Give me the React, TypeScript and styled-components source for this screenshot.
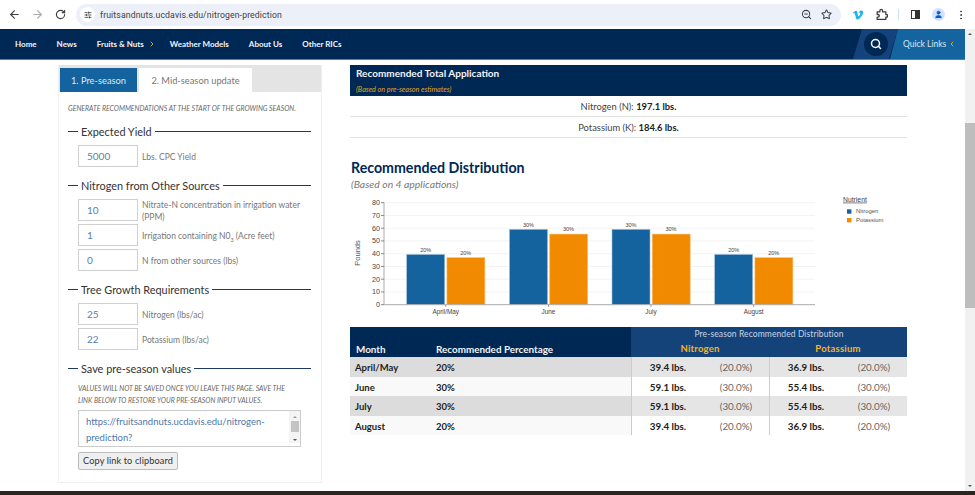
import React from "react";
import styled, { createGlobalStyle } from "styled-components";
import { ArrowLeft, ArrowRight, RotateCw, SlidersHorizontal, ZoomOut, Star, User, MoreVertical, ChevronRight, ChevronLeft, Search } from "lucide-react";
import { FaVimeoV } from "react-icons/fa";

const Global = createGlobalStyle`
  html, body { margin: 0; padding: 0; background: #fff; overflow: hidden; }
  * { box-sizing: border-box; }
  body { font-family: Lato, "Open Sans", sans-serif; }
`;

const Screen = styled.div`
  width: 975px; height: 495px; display: flex; flex-direction: column; overflow: hidden; background: #fff;
`;
const BrowserBar = styled.div`
  height: 29px; flex: none; display: flex; align-items: center; background: #fff; padding-left: 3px;
`;
const ToolIcon = styled.span<{ $w?: number; $c?: string; $ml?: number }>`
  width: ${p => p.$w ?? 23}px; margin-left: ${p => p.$ml ?? 0}px; display: flex; justify-content: center; align-items: center; color: ${p => p.$c ?? "#3c4043"}; flex: none;
`;
const UrlPill = styled.div`
  margin-left: 4px; width: 765px; height: 22px; border-radius: 11px; background: #edf0f9; display: flex; align-items: center; padding-left: 4px; padding-right: 5px; flex: none;
`;
const SiteChip = styled.span`
  width: 15px; height: 15px; border-radius: 50%; background: #fff; display: flex; align-items: center; justify-content: center; color: #333; flex: none;
`;
const UrlText = styled.span`
  margin-left: 5px; font: 8.7px Roboto, sans-serif; color: #3c4043; letter-spacing: .12px; flex: 1;
`;
const Divider = styled.span`
  width: 1px; height: 11px; background: #cfe0f0; margin: 0 6px 0 5px; flex: none;
`;
const Avatar = styled.span`
  width: 13px; height: 13px; border-radius: 50%; background: #d3e3fd; color: #0b57d0; display: flex; align-items: center; justify-content: center;
`;
const SidePanel = styled.span`
  width: 9px; height: 9px; border: 1.4px solid #333; display: block; background: linear-gradient(90deg, #fff 50%, #333 50%);
`;
const Viewport = styled.div`
  flex: 1; display: flex; min-height: 0;
`;
const PageColumn = styled.div`
  flex: 1; display: flex; flex-direction: column; min-width: 0;
`;
const Nav = styled.nav`
  height: 31px; flex: none; background: #002855; border-bottom: 1px solid #5d7fa5; display: flex; align-items: center; padding-left: 15px;
`;
const NavLink = styled.a<{ $mr?: number }>`
  color: #f3f5f8; font: 700 8px Lato, sans-serif; margin-right: ${p => p.$mr ?? 20}px; display: flex; align-items: center; gap: 4px; white-space: nowrap;
`;
const NavRight = styled.div`
  margin-left: auto; display: flex; height: 100%;
`;
const SearchBlock = styled.div`
  width: 45px; background: #14427a; clip-path: polygon(9px 0, 100% 0, 36px 100%, 0 100%); display: flex; align-items: center; justify-content: center;
`;
const SearchCircle = styled.span`
  width: 24px; height: 24px; border-radius: 50%; background: #002855; color: #fff; display: flex; align-items: center; justify-content: center;
`;
const QuickBlock = styled.div`
  width: 75px; margin-left: -8px; background: #14659f; clip-path: polygon(8px 0, 100% 0, 100% 100%, 0 100%); display: flex; align-items: center; padding-left: 13px; gap: 2px; color: #d8e6f2; font: 400 8.5px Lato, sans-serif; white-space: nowrap;
`;
const Content = styled.div`
  flex: 1; display: flex; align-items: flex-start; padding: 5px 0 0 58px; gap: 28px; min-height: 0;
`;
const Panel = styled.section`
  width: 264px; height: 418px; flex: none; border: 1px solid #efefef; border-top: 0;
`;
const Tabs = styled.div`
  height: 27px; background: #e4e4e4; display: flex; align-items: flex-end; padding-left: 1px; gap: 2px;
`;
const Tab = styled.div<{ $on?: boolean; $w: number }>`
  width: ${p => p.$w}px; height: 24px; display: flex; align-items: center; justify-content: center; font: 400 9.3px Lato, sans-serif;
  background: ${p => (p.$on ? "#14639e" : "#fff")}; color: ${p => (p.$on ? "#dfe9f3" : "#777")};
`;
const Intro = styled.p`
  margin: 10px 0 0 9px; font: italic 400 6.9px/12px Lato, sans-serif; color: #666; text-transform: uppercase; white-space: nowrap;
`;
const Fieldset = styled.div<{ $mt: number }>`
  margin: ${p => p.$mt}px 10px 0 9px;
`;
const Legend = styled.div`
  display: flex; align-items: center; height: 14px; font: 400 10.9px Lato, sans-serif; color: #333; gap: 3px; white-space: nowrap;
  &::before { content: ""; width: 10px; height: 1px; background: #1d3a60; }
  &::after { content: ""; flex: 1; height: 1px; background: #1d3a60; }
`;
const Rows = styled.div`
  margin: 7px 0 0 10px; display: flex; flex-direction: column; gap: 3px;
`;
const Row = styled.div`
  display: flex; align-items: center; gap: 4px; height: 22px;
`;
const FieldInput = styled.div`
  width: 60px; height: 22px; flex: none; border: 1.5px solid #d0d0d0; display: flex; align-items: center; padding-left: 8px; font: 400 10px Lato, sans-serif; color: #5b80ad;
`;
const FieldLabel = styled.span`
  font: 400 8.5px/12px Lato, sans-serif; color: #777; padding-top: 1px;
  sub { font-size: 5.5px; line-height: 0; }
`;
const SaveNote = styled.p`
  margin: 7px 0 0 10px; font: italic 400 6.9px/12px Lato, sans-serif; color: #666; text-transform: uppercase; white-space: nowrap;
`;
const LinkBox = styled.div`
  margin: 4px 0 0 10px; width: 223px; height: 37px; border: 1px solid #ccc; display: flex; justify-content: space-between; padding: 3px 0 0 7px; overflow: hidden;
  font: 400 9.5px/15.5px Lato, sans-serif; color: #4f77a8;
`;
const BoxScroll = styled.div`
  width: 11px; height: 100%; margin-top: -3px; background: #f4f4f4; display: flex; flex-direction: column; align-items: center; justify-content: space-between; flex: none; padding: 5px 0 2px;
  &::before { content: ""; border: 2.5px solid transparent; border-bottom-color: #999; border-top: 0; }
  &::after { content: ""; border: 2.5px solid transparent; border-top-color: #555; border-bottom: 0; }
`;
const BoxThumb = styled.span`
  width: 8px; height: 11px; background: #c4c4c4; margin-bottom: 4px;
`;
const CopyButton = styled.button`
  display: block; margin: 4.5px 0 0 10px; width: 100px; height: 18px; padding: 0; background: #efefef; border: 1.5px solid #bbb; border-radius: 2px; font: 400 9.2px Lato, sans-serif; color: #333; letter-spacing: .1px;
`;
const Results = styled.div`
  width: 557px; flex: none;
`;
const TotalHead = styled.div`
  height: 31px; background: #002855; padding: 2px 6px 1px; display: flex; flex-direction: column; justify-content: space-between;
`;
const TotalTitle = styled.div`
  font: 700 10px/13px Lato, sans-serif; color: #f1f4f7;
`;
const TotalSub = styled.div`
  font: italic 400 7.2px/10px Lato, sans-serif; color: #e0a11f;
`;
const TotalRow = styled.div`
  height: 21px; border-bottom: 1px solid #e2e2e2; text-align: center; font: 400 9.4px/21px Lato, sans-serif; color: #444;
  b { color: #222; }
`;
const DistTitle = styled.h2`
  margin: 20px 0 0 1px; font: 700 14.2px/20px Lato, sans-serif; color: #002855;
`;
const DistSub = styled.div`
  font: italic 400 10.4px/12px Lato, sans-serif; color: #777; margin: 0 0 0 1px;
`;
const ChartSvg = styled.svg`
  display: block; margin: 5px 0 0 1px; text { font-family: "Liberation Sans", sans-serif; }
`;
const Table = styled.div`
  margin-top: 5px; display: grid; grid-template-columns: 86px 195px 138px 138px;
`;
const HeadLeft = styled.div<{ $pl?: number }>`
  background: #002855; height: 30px; color: #f1f4f7; font: 700 9.9px/14px Lato, sans-serif; padding: 15px 0 0 ${p => p.$pl ?? 0}px; white-space: nowrap;
`;
const HeadRight = styled.div`
  grid-column: span 2; background: #14437a; height: 30px; display: flex; flex-direction: column; align-items: center;
`;
const HeadTop = styled.div`
  height: 15px; font: 400 8.5px/15px Lato, sans-serif; color: #c7d4e4; letter-spacing: .1px;
`;
const HeadCols = styled.div`
  display: grid; grid-template-columns: 138px 138px; width: 100%; text-align: center; padding-right: 4px; font: 700 9.5px/14px Lato, sans-serif; color: #f3b61f; letter-spacing: .2px;
`;
const Cell = styled.div<{ $odd: boolean; $pl?: number }>`
  height: 19.6px; background: ${p => (p.$odd ? "#dcdcdc" : "#f9f9f9")}; font: 700 9.5px/21.5px Lato, sans-serif; color: #222; padding-left: ${p => p.$pl ?? 0}px;
`;
const ValueCell = styled.div<{ $odd: boolean }>`
  height: 19.6px; background: ${p => (p.$odd ? "#e5e5e5" : "#fff")}; border-left: 1px solid #ccc; display: grid; grid-template-columns: 72px 64px; text-align: center; font: 400 9.8px/21px Lato, sans-serif; color: #666;
  b { color: #222; font-weight: 700; }
`;
const Scrollbar = styled.div`
  width: 10px; flex: none; background: #f1f1f1; display: flex; flex-direction: column; align-items: center; padding-top: 4px;
  &::before { content: ""; border: 2.5px solid transparent; border-bottom-color: #555; border-top: 0; }
  &::after { content: ""; margin-top: auto; margin-bottom: 4px; border: 2.5px solid transparent; border-top-color: #555; border-bottom: 0; }
`;
const Thumb = styled.div`
  width: 100%; height: 185px; background: #bdbdbd; margin-top: 88px;
`;
const Footer = styled.div`
  height: 4px; flex: none; background: #2b2620;
`;

const ticks = [0, 10, 20, 30, 40, 50, 60, 70, 80];
const y = (v: number) => 109.7 - v * 1.275;
const groups = [
  { name: "April/May", x: 55.7, n: 39.4, k: 36.9, p: "20%" },
  { name: "June", x: 158.5, n: 59.1, k: 55.4, p: "30%" },
  { name: "July", x: 261, n: 59.1, k: 55.4, p: "30%" },
  { name: "August", x: 363.7, n: 39.4, k: 36.9, p: "20%" },
];

function ExtensionIcon() {
  return (
    <svg width={13} height={13} viewBox="0 0 24 24" fill="none" stroke="#3c4043" strokeWidth={2.4} strokeLinejoin="round">
      <path d="M4 7h5V5a2.5 2.5 0 0 1 5 0v2h6v5h1a2.5 2.5 0 0 1 0 5h-1v4H4v-4h1.5a2.5 2.5 0 0 0 0-5H4z" />
    </svg>
  );
}

function Chart() {
  return (
    <ChartSvg width={556} height={127} viewBox="0 0 556 127">
      {ticks.slice(1).map(t => <line key={t} x1={33} x2={464} y1={y(t)} y2={y(t)} stroke="#f3f3f3" />)}
      <line x1={33} x2={33} y1={y(80)} y2={y(0)} stroke="#aaa" />
      {ticks.map(t => (
        <g key={t}>
          <line x1={30} x2={33} y1={y(t)} y2={y(t)} stroke="#888" />
          <text x={29} y={y(t) + 2.5} fontSize={7.2} fill="#444" textAnchor="end">{t}</text>
        </g>
      ))}
      <text transform="translate(8.5 58) rotate(-90)" fontSize={7.5} fill="#555" textAnchor="middle">Pounds</text>
      {groups.map(g => (
        <g key={g.name}>
          <rect x={g.x} y={y(g.n)} width={38} height={g.n * 1.275} fill="#14639e" stroke="#9dbfd9" strokeWidth={0.6} />
          <rect x={g.x + 40.2} y={y(g.k)} width={38} height={g.k * 1.275} fill="#f28a00" stroke="#f8c27a" strokeWidth={0.6} />
          <text x={g.x + 19} y={y(g.n) - 2.8} fontSize={5.5} fill="#444" textAnchor="middle">{g.p}</text>
          <text x={g.x + 59} y={y(g.k) - 2.8} fontSize={5.5} fill="#444" textAnchor="middle">{g.p}</text>
          <line x1={g.x + 39} x2={g.x + 39} y1={y(0)} y2={y(0) + 2} stroke="#888" />
          <text x={g.x + 39} y={y(0) + 9} fontSize={6.4} fill="#444" textAnchor="middle">{g.name}</text>
        </g>
      ))}
      <line x1={33} x2={464} y1={y(0)} y2={y(0)} stroke="#aaa" />
      <text x={492} y={6.6} fontSize={6.8} fill="#444" textDecoration="underline">Nutrient</text>
      <rect x={496} y={14.3} width={4.4} height={4.4} fill="#14639e" />
      <text x={505} y={18.2} fontSize={5.9} fill="#555">Nitrogen</text>
      <rect x={496} y={23} width={4.4} height={4.4} fill="#f28a00" />
      <text x={505} y={27} fontSize={5.9} fill="#555">Potassium</text>
    </ChartSvg>
  );
}

const months = [
  { m: "April/May", p: "20%", n: "39.4", np: "(20.0%)", k: "36.9", kp: "(20.0%)" },
  { m: "June", p: "30%", n: "59.1", np: "(30.0%)", k: "55.4", kp: "(30.0%)" },
  { m: "July", p: "30%", n: "59.1", np: "(30.0%)", k: "55.4", kp: "(30.0%)" },
  { m: "August", p: "20%", n: "39.4", np: "(20.0%)", k: "36.9", kp: "(20.0%)" },
];

export default function App() {
  return (
    <Screen>
      <Global />
      <BrowserBar>
        <ToolIcon><ArrowLeft size={13} /></ToolIcon>
        <ToolIcon $c="#a8a8a8"><ArrowRight size={13} /></ToolIcon>
        <ToolIcon><RotateCw size={11} strokeWidth={2.4} /></ToolIcon>
        <UrlPill>
          <SiteChip><SlidersHorizontal size={8} strokeWidth={2.4} /></SiteChip>
          <UrlText>fruitsandnuts.ucdavis.edu/nitrogen-prediction</UrlText>
          <ToolIcon $w={20}><ZoomOut size={11} strokeWidth={2.2} /></ToolIcon>
          <ToolIcon $w={20}><Star size={11} strokeWidth={2.2} /></ToolIcon>
        </UrlPill>
        <ToolIcon $w={24} $c="#1ab7ea" $ml={5}><FaVimeoV size={12} /></ToolIcon>
        <ToolIcon $w={23}><ExtensionIcon /></ToolIcon>
        <Divider />
        <ToolIcon $w={20}><SidePanel /></ToolIcon>
        <ToolIcon $w={26}><Avatar><User size={9} fill="#0b57d0" /></Avatar></ToolIcon>
        <ToolIcon $w={20}><MoreVertical size={12} /></ToolIcon>
      </BrowserBar>
      <Viewport>
        <PageColumn>
          <Nav>
            <NavLink>Home</NavLink>
            <NavLink>News</NavLink>
            <NavLink $mr={14}>Fruits &amp; Nuts <ChevronRight size={8} color="#e0a11f" strokeWidth={3} /></NavLink>
            <NavLink>Weather Models</NavLink>
            <NavLink>About Us</NavLink>
            <NavLink>Other RICs</NavLink>
            <NavRight>
              <SearchBlock><SearchCircle><Search size={12} strokeWidth={3} /></SearchCircle></SearchBlock>
              <QuickBlock>Quick Links <ChevronLeft size={8} color="#e0a11f" strokeWidth={3} /></QuickBlock>
            </NavRight>
          </Nav>
          <Content>
            <Panel>
              <Tabs>
                <Tab $on $w={77}>1. Pre-season</Tab>
                <Tab $w={113}>2. Mid-season update</Tab>
              </Tabs>
              <Intro>Generate recommendations at the start of the growing season.</Intro>
              <Fieldset $mt={10}>
                <Legend>Expected Yield</Legend>
                <Rows>
                  <Row><FieldInput>5000</FieldInput><FieldLabel>Lbs. CPC Yield</FieldLabel></Row>
                </Rows>
              </Fieldset>
              <Fieldset $mt={11}>
                <Legend>Nitrogen from Other Sources</Legend>
                <Rows>
                  <Row><FieldInput>10</FieldInput><FieldLabel>Nitrate-N concentration in irrigation water (PPM)</FieldLabel></Row>
                  <Row><FieldInput>1</FieldInput><FieldLabel>Irrigation containing N0<sub>3</sub> (Acre feet)</FieldLabel></Row>
                  <Row><FieldInput>0</FieldInput><FieldLabel>N from other sources (lbs)</FieldLabel></Row>
                </Rows>
              </Fieldset>
              <Fieldset $mt={11}>
                <Legend>Tree Growth Requirements</Legend>
                <Rows>
                  <Row><FieldInput>25</FieldInput><FieldLabel>Nitrogen (lbs/ac)</FieldLabel></Row>
                  <Row><FieldInput>22</FieldInput><FieldLabel>Potassium (lbs/ac)</FieldLabel></Row>
                </Rows>
              </Fieldset>
              <Fieldset $mt={11}>
                <Legend>Save pre-season values</Legend>
                <SaveNote>Values will not be saved once you leave this page. Save the<br />link below to restore your pre-season input values.</SaveNote>
                <LinkBox>
                  <div>https://fruitsandnuts.ucdavis.edu/nitrogen-<br />prediction?</div>
                  <BoxScroll><BoxThumb /></BoxScroll>
                </LinkBox>
                <CopyButton>Copy link to clipboard</CopyButton>
              </Fieldset>
            </Panel>
            <Results>
              <TotalHead>
                <TotalTitle>Recommended Total Application</TotalTitle>
                <TotalSub>(Based on pre-season estimates)</TotalSub>
              </TotalHead>
              <TotalRow>Nitrogen (N): <b>197.1 lbs.</b></TotalRow>
              <TotalRow>Potassium (K): <b>184.6 lbs.</b></TotalRow>
              <DistTitle>Recommended Distribution</DistTitle>
              <DistSub>(Based on 4 applications)</DistSub>
              <Chart />
              <Table>
                <HeadLeft $pl={6}>Month</HeadLeft>
                <HeadLeft>Recommended Percentage</HeadLeft>
                <HeadRight>
                  <HeadTop>Pre-season Recommended Distribution</HeadTop>
                  <HeadCols><span>Nitrogen</span><span>Potassium</span></HeadCols>
                </HeadRight>
                {months.map((r, i) => (
                  <React.Fragment key={r.m}>
                    <Cell $odd={i % 2 === 0} $pl={5}>{r.m}</Cell>
                    <Cell $odd={i % 2 === 0}>{r.p}</Cell>
                    <ValueCell $odd={i % 2 === 0}><b>{r.n} lbs.</b><span>{r.np}</span></ValueCell>
                    <ValueCell $odd={i % 2 === 0}><b>{r.k} lbs.</b><span>{r.kp}</span></ValueCell>
                  </React.Fragment>
                ))}
              </Table>
            </Results>
          </Content>
        </PageColumn>
        <Scrollbar><Thumb /></Scrollbar>
      </Viewport>
      <Footer />
    </Screen>
  );
}
